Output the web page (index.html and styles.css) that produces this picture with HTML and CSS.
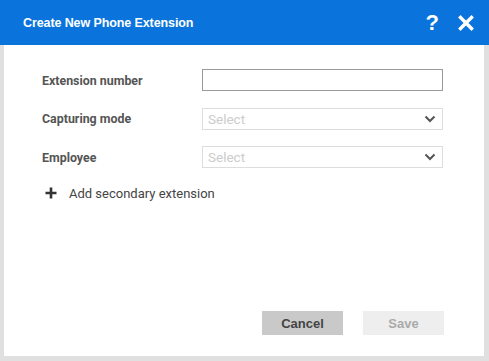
FILE: index.html
```html
<!DOCTYPE html>
<html>
<head>
<meta charset="utf-8">
<link rel="stylesheet" href="styles.css">
</head>
<body>
<div class="dialog">
  <div class="header">
    <div class="title">Create New Phone Extension</div>
    <div class="actions">
      <span class="help">?</span>
      <svg class="close" width="16" height="16" viewBox="0 0 16 16"><path d="M2.5 2.5 L13.5 13.5 M13.5 2.5 L2.5 13.5" stroke="#fff" stroke-width="3.4" stroke-linecap="square"/></svg>
    </div>
  </div>
  <div class="body">
    <div class="form">
      <div class="row">
        <label class="label">Extension number</label>
        <div class="input"></div>
      </div>
      <div class="row">
        <label class="label">Capturing mode</label>
        <div class="input select"><span class="ph">Select</span>
          <svg width="12" height="8" viewBox="0 0 12 8"><path d="M1.5 1.5 L6 6 L10.5 1.5" fill="none" stroke="#555" stroke-width="2"/></svg>
        </div>
      </div>
      <div class="row">
        <label class="label">Employee</label>
        <div class="input select"><span class="ph">Select</span>
          <svg width="12" height="8" viewBox="0 0 12 8"><path d="M1.5 1.5 L6 6 L10.5 1.5" fill="none" stroke="#555" stroke-width="2"/></svg>
        </div>
      </div>
      <div class="add">
        <svg width="12" height="12" viewBox="0 0 12 12"><path d="M6 0.5 V11.5 M0.5 6 H11.5" stroke="#333" stroke-width="2.6"/></svg>
        <span>Add secondary extension</span>
      </div>
    </div>
    <div class="footer">
      <button class="btn cancel">Cancel</button>
      <button class="btn save">Save</button>
    </div>
  </div>
</div>
</body>
</html>
```
FILE: styles.css
```css
html, body {
  margin: 0;
  padding: 0;
  background: #e0e0e0;
}
.dialog {
  width: 489px;
  height: 361px;
  display: flex;
  flex-direction: column;
  background: #e0e0e0;
}
.header {
  height: 45px;
  background: #0a74dc;
  display: flex;
  align-items: center;
  justify-content: space-between;
  padding: 0 15px 0 23px;
  box-sizing: border-box;
  flex: none;
}
.title {
  color: #fff;
  font-family: "Liberation Sans", Arial, sans-serif;
  font-weight: bold;
  font-size: 12.5px;
  letter-spacing: -0.1px;
}
.actions {
  display: flex;
  align-items: center;
  gap: 19px;
}
.help {
  color: #fff;
  font-family: "Liberation Sans", Arial, sans-serif;
  font-weight: bold;
  font-size: 22px;
  line-height: 1;
}
.close {
  display: block;
}
.body {
  flex: 1;
  margin: 0 5px 5px 4px;
  background: #fff;
  display: flex;
  flex-direction: column;
  justify-content: space-between;
}
.form {
  padding: 24px 0 0 38px;
  display: flex;
  flex-direction: column;
  gap: 16.5px;
}
.row {
  display: flex;
  align-items: center;
  height: 22px;
}
.label {
  width: 160px;
  font-family: Roboto, sans-serif;
  font-weight: bold;
  font-size: 12.4px;
  color: #555;
}
.input {
  width: 241px;
  height: 22px;
  box-sizing: border-box;
  border: 1px solid #999;
}
.select {
  border-color: #ddd;
  display: flex;
  align-items: center;
  justify-content: space-between;
  padding: 0 6px 0 5px;
}
.ph {
  font-family: Roboto, sans-serif;
  font-size: 13.5px;
  color: #cccccc;
}
.select svg {
  display: block;
}
.add {
  display: flex;
  align-items: center;
  gap: 12px;
  margin: 1px 0 0 3px;
  font-family: Roboto, sans-serif;
  font-size: 13px;
  color: #444;
}
.add svg {
  display: block;
}
.footer {
  display: flex;
  justify-content: flex-end;
  gap: 20px;
  padding: 0 40px 21px 0;
}
.btn {
  width: 81px;
  height: 24px;
  border: none;
  font-family: "Liberation Sans", Arial, sans-serif;
  font-weight: bold;
  font-size: 13px;
  padding: 0;
}
.cancel {
  background: #c9c9c9;
  color: #444;
}
.save {
  background: #eeeeee;
  color: #aaa;
}
```
